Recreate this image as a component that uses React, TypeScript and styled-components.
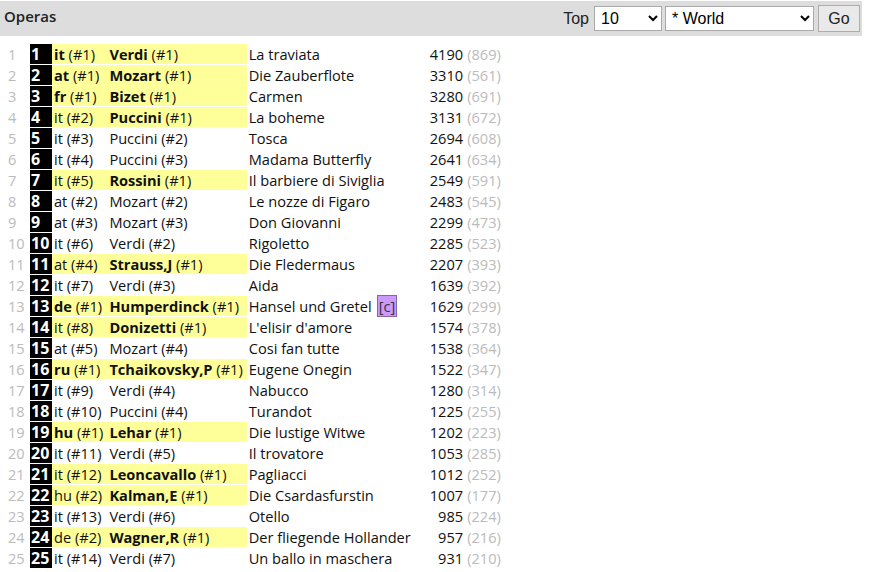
import React from 'react';
import styled, { createGlobalStyle } from 'styled-components';

const GlobalStyle = createGlobalStyle`
    body {
        margin: 0;
        background: #fff;
        font-family: 'Open Sans', 'DejaVu Sans', sans-serif;
    }
`;

// country, country#, composer, composer#, title, count, sub, tag
const rows: [string, number, string, number, string, number, number, string?][] = [
    ['it', 1, 'Verdi', 1, 'La traviata', 4190, 869],
    ['at', 1, 'Mozart', 1, 'Die Zauberflote', 3310, 561],
    ['fr', 1, 'Bizet', 1, 'Carmen', 3280, 691],
    ['it', 2, 'Puccini', 1, 'La boheme', 3131, 672],
    ['it', 3, 'Puccini', 2, 'Tosca', 2694, 608],
    ['it', 4, 'Puccini', 3, 'Madama Butterfly', 2641, 634],
    ['it', 5, 'Rossini', 1, 'Il barbiere di Siviglia', 2549, 591],
    ['at', 2, 'Mozart', 2, 'Le nozze di Figaro', 2483, 545],
    ['at', 3, 'Mozart', 3, 'Don Giovanni', 2299, 473],
    ['it', 6, 'Verdi', 2, 'Rigoletto', 2285, 523],
    ['at', 4, 'Strauss,J', 1, 'Die Fledermaus', 2207, 393],
    ['it', 7, 'Verdi', 3, 'Aida', 1639, 392],
    ['de', 1, 'Humperdinck', 1, 'Hansel und Gretel', 1629, 299, 'c'],
    ['it', 8, 'Donizetti', 1, "L'elisir d'amore", 1574, 378],
    ['at', 5, 'Mozart', 4, 'Cosi fan tutte', 1538, 364],
    ['ru', 1, 'Tchaikovsky,P', 1, 'Eugene Onegin', 1522, 347],
    ['it', 9, 'Verdi', 4, 'Nabucco', 1280, 314],
    ['it', 10, 'Puccini', 4, 'Turandot', 1225, 255],
    ['hu', 1, 'Lehar', 1, 'Die lustige Witwe', 1202, 223],
    ['it', 11, 'Verdi', 5, 'Il trovatore', 1053, 285],
    ['it', 12, 'Leoncavallo', 1, 'Pagliacci', 1012, 252],
    ['hu', 2, 'Kalman,E', 1, 'Die Csardasfurstin', 1007, 177],
    ['it', 13, 'Verdi', 6, 'Otello', 985, 224],
    ['de', 2, 'Wagner,R', 1, 'Der fliegende Hollander', 957, 216],
    ['it', 14, 'Verdi', 7, 'Un ballo in maschera', 931, 210],
];

const App = (): React.ReactElement => {
    return (
        <Page>
            <GlobalStyle />
            <TitleBar>
                <Title>Operas</Title>
                <Controls>
                    <Label>Top</Label>
                    <Select $w={68}>
                        <option>10</option>
                    </Select>
                    <Select $w={149}>
                        <option>* World</option>
                    </Select>
                    <GoButton>Go</GoButton>
                </Controls>
            </TitleBar>
            <Table>
                <tbody>
                    {rows.map(([c, cn, comp, compn, title, count, sub, tag], i) => (
                        <tr key={i}>
                            <Idx>{i + 1}</Idx>
                            <Rank>{i + 1}</Rank>
                            <Cell $hl={compn === 1}>
                                {cn === 1 ? <b>{c}</b> : c} (#{cn})
                            </Cell>
                            <Cell $hl={compn === 1}>
                                {compn === 1 ? <b>{comp}</b> : comp} (#{compn})
                            </Cell>
                            <TitleCell>
                                {title}
                                {tag && <Tag>[{tag}]</Tag>}
                            </TitleCell>
                            <Count>{count}</Count>
                            <Sub>({sub})</Sub>
                        </tr>
                    ))}
                </tbody>
            </Table>
        </Page>
    );
};

export default App;

const Page = styled.div`
    width: 874px;
    padding-top: 1px;
`;

const TitleBar = styled.div`
    display: flex;
    justify-content: space-between;
    align-items: center;
    background: #dddddd;
    width: 862px;
    height: 35px;
    box-sizing: border-box;
    padding: 0 2px 0 4px;
`;

const Title = styled.div`
    align-self: flex-start;
    padding-top: 5px;
    font-size: 15px;
    font-weight: 600;
    color: #222;
`;

const Controls = styled.div`
    display: flex;
    align-items: center;
    gap: 3px;
    font-family: 'Liberation Sans', Arial, sans-serif;
    font-size: 16px;
`;

const Label = styled.span`
    color: #222;
    margin-right: 2px;
`;

const Select = styled.select<{ $w: number }>`
    width: ${(p) => p.$w}px;
    height: 25px;
    font-family: 'Liberation Sans', Arial, sans-serif;
    font-size: 16px;
    border: 1px solid #a9a9a9;
    background: #fff;
    color: #000;
    padding: 0 2px;
`;

const GoButton = styled.button`
    width: 42px;
    height: 27px;
    margin-left: 1px;
    font-family: 'Liberation Sans', Arial, sans-serif;
    font-size: 16px;
    border: 1px solid #adadad;
    background: #e9e9e9;
    color: #222;
`;

const Table = styled.table`
    margin: 8px 0 0 5px;
    border-collapse: collapse;
    font-size: 14.6px;
    color: #111;
    td {
        height: 20px;
        padding: 0;
        white-space: nowrap;
        line-height: 20px;
        border-bottom: 1px solid #fff;
    }
`;

const Idx = styled.td`
    width: 22px;
    color: #bbb;
    text-align: left;
    padding-left: 3px !important;
`;

const Rank = styled.td`
    background: #000;
    color: #fff;
    font-weight: 700;
    font-size: 16px;
    text-align: left;
    padding: 0 1px !important;
    width: 20px;
`;

const Cell = styled.td<{ $hl: boolean }>`
    background: ${(p) => (p.$hl ? '#ffff99' : 'transparent')};
    padding: 0 4px 0 2px !important;
    b {
        font-weight: 700;
    }
`;

const TitleCell = styled.td`
    padding-left: 2px !important;
    min-width: 175px;
`;

const Tag = styled.span`
    background: #cc99ff;
    color: #333;
    margin-left: 5px;
    padding: 0 1px;
    border: 1px solid #8866aa;
`;

const Count = styled.td`
    text-align: right;
    padding-left: 6px !important;
`;

const Sub = styled.td`
    color: #bbb;
    padding-left: 4px !important;
`;
